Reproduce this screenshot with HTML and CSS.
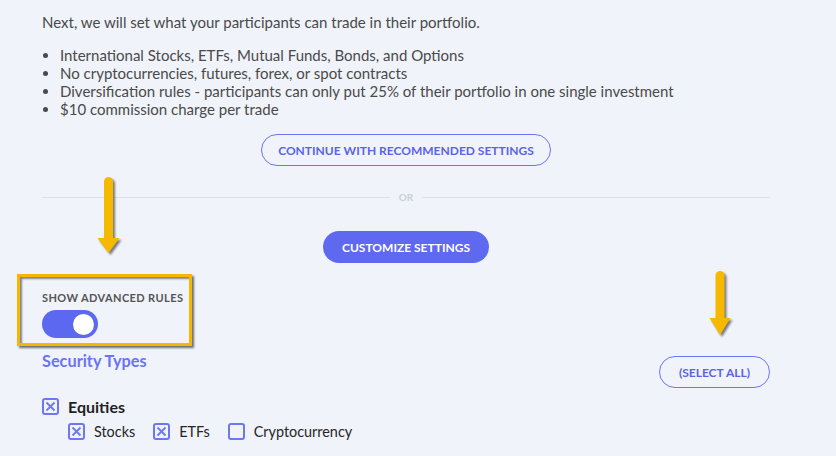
FILE: index.html
```html
<!DOCTYPE html>
<html>
<head>
<meta charset="utf-8">
<link rel="stylesheet" href="styles.css">
</head>
<body>
<div class="page">
  <p class="intro">Next, we will set what your participants can trade in their portfolio.</p>
  <ul class="rules">
    <li>International Stocks, ETFs, Mutual Funds, Bonds, and Options</li>
    <li>No cryptocurrencies, futures, forex, or spot contracts</li>
    <li>Diversification rules - participants can only put 25% of their portfolio in one single investment</li>
    <li>$10 commission charge per trade</li>
  </ul>
  <div class="center">
    <button class="btn btn-outline btn-wide">CONTINUE WITH RECOMMENDED SETTINGS</button>
  </div>
  <div class="divider"><span>OR</span></div>
  <div class="center">
    <button class="btn btn-fill">CUSTOMIZE SETTINGS</button>
  </div>
  <div class="advanced">
    <div class="adv-label">SHOW ADVANCED RULES</div>
    <div class="toggle"><span class="knob"></span></div>
  </div>
  <div class="sec-row">
    <h3 class="sec-title">Security Types</h3>
    <button class="btn btn-outline btn-small">(SELECT ALL)</button>
  </div>
  <div class="check-main">
    <span class="box"><svg viewBox="0 0 13 13"><path d="M2.5 2.5L10.5 10.5M10.5 2.5L2.5 10.5"/></svg></span>
    <span class="main-label">Equities</span>
  </div>
  <div class="check-sub">
    <span class="item"><span class="box"><svg viewBox="0 0 13 13"><path d="M2.5 2.5L10.5 10.5M10.5 2.5L2.5 10.5"/></svg></span>Stocks</span>
    <span class="item"><span class="box"><svg viewBox="0 0 13 13"><path d="M2.5 2.5L10.5 10.5M10.5 2.5L2.5 10.5"/></svg></span>ETFs</span>
    <span class="item"><span class="box"></span>Cryptocurrency</span>
  </div>
</div>
<div class="highlight"></div>
<div class="arrow arrow-a">
  <svg viewBox="0 0 28 84" width="28" height="84"><path class="shadow" transform="translate(2 2)" d="M7 6.5 A4.5 4.5 0 0 1 16 6.5 L16 63 L22.5 63 L11.5 78 L0.5 63 L7 63 Z"/><path class="fill" d="M7 6.5 A4.5 4.5 0 0 1 16 6.5 L16 63 L22.5 63 L11.5 78 L0.5 63 L7 63 Z"/></svg>
</div>
<div class="arrow arrow-b">
  <svg viewBox="0 0 28 72" width="28" height="72"><path class="shadow" transform="translate(2 2)" d="M6.5 6.5 A4.5 4.5 0 0 1 15.5 6.5 L15.5 49 L21.5 49 L11 66 L0.5 49 L6.5 49 Z"/><path class="fill" d="M6.5 6.5 A4.5 4.5 0 0 1 15.5 6.5 L15.5 49 L21.5 49 L11 66 L0.5 49 L6.5 49 Z"/></svg>
</div>
</body>
</html>
```

FILE: styles.css
```css
* { box-sizing: border-box; }
html, body { margin: 0; padding: 0; }
body {
  background: #f0f3f9;
  font-family: Lato, "Open Sans", sans-serif;
  color: #4a4a4a;
  width: 836px;
  height: 456px;
  overflow: hidden;
  position: relative;
}
.page {
  width: 728px;
  margin-left: 42px;
  padding-top: 13px;
}
.intro {
  margin: 0;
  font-size: 15px;
  line-height: 18px;
}
.rules {
  margin: 15px 0 0 0;
  padding-left: 18px;
  font-size: 15px;
  line-height: 18px;
}
.center { display: flex; justify-content: center; }
.btn {
  font-family: Lato, sans-serif;
  font-weight: 700;
  font-size: 12px;
  height: 32px;
  border-radius: 16px;
  padding: 0 19px;
  cursor: pointer;
}
.btn-outline {
  background: transparent;
  border: 1.5px solid #6c75f2;
  color: #5a63e6;
  margin-top: 16px;
}
.btn-wide { padding: 0 16.5px; }
.btn-fill {
  background: #5f69f0;
  border: none;
  color: #fff;
  padding: 0 19px;
}
.divider {
  display: flex;
  align-items: center;
  margin: 23px 0 26px;
  height: 16px;
}
.divider::before, .divider::after {
  content: "";
  flex: 1;
  height: 1px;
  background: #dadfe5;
}
.divider span {
  font-size: 10px;
  color: #c9d1d8;
  padding: 0 9px;
  font-weight: 700;
}
.advanced { margin-top: 28px; }
.adv-label {
  font-size: 11px;
  font-weight: 700;
  color: #555;
  letter-spacing: 0.4px;
  line-height: 14px;
}
.toggle {
  margin-top: 5px;
  width: 56px;
  height: 28px;
  border-radius: 14px;
  background: #5d68f0;
  position: relative;
}
.knob {
  position: absolute;
  right: 4px;
  top: 3.5px;
  width: 21px;
  height: 21px;
  border-radius: 50%;
  background: #fff;
}
.sec-row {
  display: flex;
  justify-content: space-between;
  align-items: flex-start;
  margin-top: 13px;
}
.sec-title {
  margin: 0;
  font-size: 16.3px;
  font-weight: 700;
  color: #6b74f0;
  line-height: 20px;
}
.btn-small {
  margin-top: 5px;
  padding: 0 19px;
}
.check-main {
  display: flex;
  align-items: center;
  margin-top: 9px;
  height: 18px;
}
.box {
  width: 17px;
  height: 17px;
  border: 2px solid #6e77f2;
  border-radius: 3px;
  display: inline-flex;
  align-items: center;
  justify-content: center;
  flex: none;
}
.box svg { width: 13px; height: 13px; display: block; }
.box path { stroke: #6e77f2; stroke-width: 1.8; fill: none; }
.main-label {
  margin-left: 9px;
  font-size: 16px;
  font-weight: 700;
  color: #1f1f1f;
}
.check-sub {
  display: flex;
  align-items: center;
  margin: 8px 0 0 26px;
  font-size: 14.4px;
  color: #262626;
}
.item { display: inline-flex; align-items: center; margin-right: 18px; }
.item .box { margin-right: 9px; }
.highlight {
  position: absolute;
  left: 17px;
  top: 274px;
  width: 175px;
  height: 72px;
  border: 3px solid #f5b700;
  box-shadow: 2px 2px 2px rgba(0,0,0,0.55), inset 2px 2px 2px rgba(0,0,0,0.45);
}
.arrow { position: absolute; }
.arrow svg { display: block; overflow: visible; }
.arrow .fill { fill: #f7b800; }
.arrow .shadow { fill: rgba(0,0,0,0.5); filter: blur(1px); }
.arrow-a { left: 97px; top: 175px; }
.arrow-b { left: 709px; top: 269px; }
```
